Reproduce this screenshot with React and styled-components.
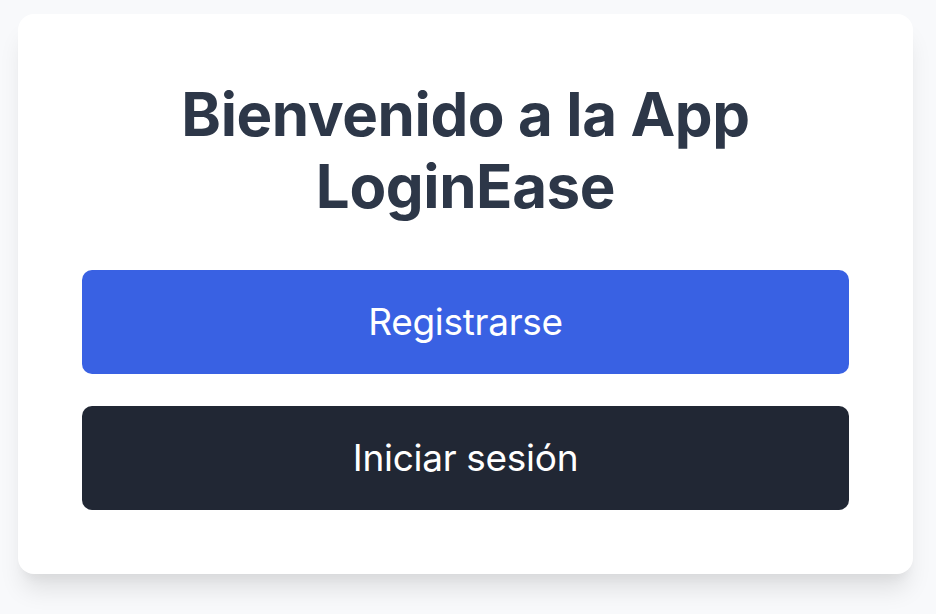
import React from 'react'
import styled, { createGlobalStyle } from 'styled-components'

const GlobalStyle = createGlobalStyle`
    html, body {
        margin: 0;
        padding: 0;
        background-color: #f8f9fb;
        font-family: Inter, "Noto Sans", "Liberation Sans", sans-serif;
    }
`

const Page = styled.div`
    min-height: 614px;
    padding: 14px 23px 0 18px;
    box-sizing: border-box;
`

const Card = styled.div`
    background-color: #ffffff;
    border-radius: 16px;
    padding: 64px;
    box-shadow: 0 20px 25px -5px rgba(0, 0, 0, 0.1), 0 10px 10px -5px rgba(0, 0, 0, 0.04);
    display: flex;
    flex-direction: column;
`

const Title = styled.h1`
    margin: 0 0 48px;
    font-size: 60px;
    line-height: 72px;
    font-weight: 700;
    color: #2d3748;
    text-align: center;
    letter-spacing: -0.4px;
`

const Actions = styled.div`
    display: flex;
    flex-direction: column;
    gap: 32px;
`

const Button = styled.button`
    width: 100%;
    border: none;
    border-radius: 10px;
    padding: 24px;
    font-family: inherit;
    font-size: 37px;
    line-height: 56px;
    font-weight: 400;
    letter-spacing: -0.3px;
    color: #ffffff;
    background-color: ${props => props.dark ? '#212734' : '#3961e3'};
    cursor: pointer;
`

const App = () => {
    return (
        <>
            <GlobalStyle />
            <Page>
                <Card>
                    <Title>Bienvenido a la App<br />LoginEase</Title>
                    <Actions>
                        <Button>Registrarse</Button>
                        <Button dark>Iniciar sesión</Button>
                    </Actions>
                </Card>
            </Page>
        </>
    )
}

export default App
